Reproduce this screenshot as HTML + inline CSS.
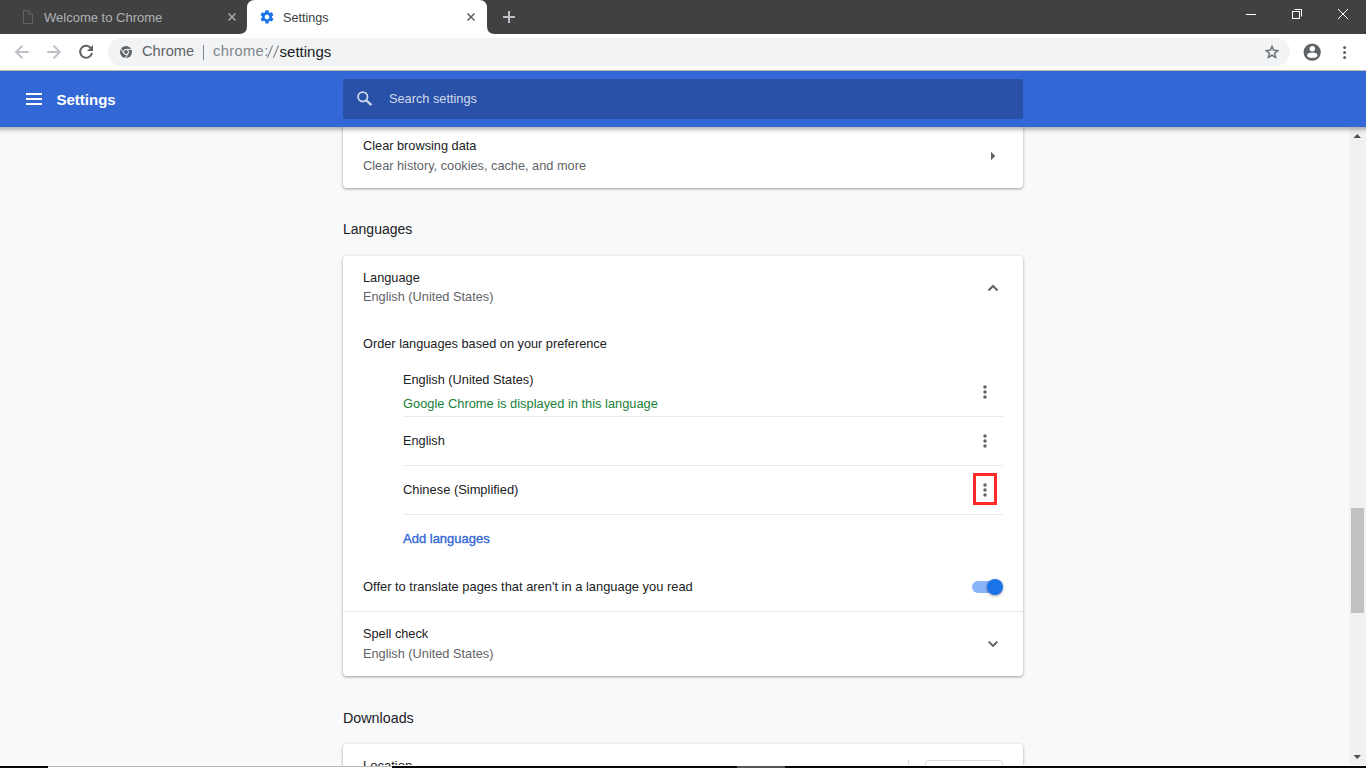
<!DOCTYPE html>
<html><head><meta charset="utf-8">
<style>
*{box-sizing:border-box;margin:0;padding:0}
html,body{width:1366px;height:768px;overflow:hidden;background:#f8f9fa;font-family:"Liberation Sans",sans-serif;color:#202124}
.a{position:absolute}
svg{position:absolute;overflow:visible}
#tabbar{position:absolute;left:0;top:0;width:1366px;height:34px;background:#414141}
#toolbar{position:absolute;left:0;top:34px;width:1366px;height:36px;background:#fff}
#tbline{position:absolute;left:0;top:70px;width:1366px;height:1px;background:#b9b5b0}
#omni{position:absolute;left:108px;top:38px;width:1182px;height:28px;border-radius:14px;background:#f1f3f4}
#header{position:absolute;left:0;top:71px;width:1366px;height:56px;background:#3367d6}
#search{position:absolute;left:343px;top:79px;width:680px;height:40px;border-radius:2px;background:#2851a7}
#shadow{position:absolute;left:0;top:127px;width:1366px;height:7px;background:linear-gradient(to bottom,rgba(0,0,0,.25) 0px,rgba(0,0,0,.25) 1px,rgba(0,0,0,.22) 1px,rgba(0,0,0,.22) 2px,rgba(0,0,0,.165) 2px,rgba(0,0,0,.165) 3px,rgba(0,0,0,.11) 3px,rgba(0,0,0,.11) 4px,rgba(0,0,0,.06) 4px,rgba(0,0,0,.06) 5px,rgba(0,0,0,.03) 5px,rgba(0,0,0,.03) 6px,rgba(0,0,0,.01) 6px,rgba(0,0,0,.01) 7px)}
#sb{position:absolute;left:1349px;top:127px;width:17px;height:641px;background:#f1f1f1}
#thumb{position:absolute;left:1351px;top:508px;width:13px;height:105px;background:#c1c1c1}
.card{position:absolute;left:343px;width:680px;background:#fff;border-radius:4px;box-shadow:0 1px 2px 0 rgba(60,64,67,.3),0 1px 3px 1px rgba(60,64,67,.15)}
.t{position:absolute;font-size:12.75px;white-space:nowrap;line-height:15px;color:#202124}
.sec{color:#5f6368}
.sh{position:absolute;font-size:14px;line-height:17px;white-space:nowrap;color:#202124}
.hr{position:absolute;height:1px;background:#e8eaed}
</style></head>
<body>
<div id="tabbar"></div>
<svg width="1366" height="34" style="left:0;top:0">
  <path d="M239 34 Q247 34 247 26 L247 8 Q247 0 255 0 L479 0 Q487 0 487 8 L487 26 Q487 34 495 34 Z" fill="#fff"/>
  <!-- inactive doc icon -->
  <path d="M23.5 10.5 H28.7 L32.5 14.3 V23.5 H23.5 Z M28.7 10.5 V14.3 H32.5" fill="none" stroke="#616161" stroke-width="1"/>
  <!-- inactive close -->
  <path d="M228.5 13.5 L235.5 20.5 M235.5 13.5 L228.5 20.5" stroke="#a8abae" stroke-width="1.5"/>
  <!-- gear -->
  <g transform="translate(259.08 8.98) scale(0.66)">
    <path fill="#1a73e8" d="M19.43 12.98c.04-.32.07-.64.07-.98s-.03-.66-.07-.98l2.11-1.65c.19-.15.24-.42.12-.64l-2-3.46c-.12-.22-.39-.3-.61-.22l-2.490 1c-.52-.4-1.080-.73-1.690-.98l-.38-2.650C14.460 2.180 14.250 2 14 2h-4c-.25 0-.46.18-.49.42l-.38 2.65c-.61.25-1.17.59-1.69.98l-2.49-1c-.23-.09-.49 0-.61.22l-2 3.46c-.13.22-.07.49.12.64l2.11 1.65c-.04.32-.07.65-.07.98s.03.66.07.98l-2.11 1.65c-.19.15-.24.42-.12.64l2 3.46c.12.22.39.3.61.22l2.49-1c.52.4 1.08.73 1.69.98l.38 2.65c.03.24.24.42.49.42h4c.25 0 .46-.18.49-.42l.38-2.65c.61-.25 1.17-.59 1.69-.98l2.49 1c.23.09.49 0 .61-.22l2-3.46c.12-.22.07-.49-.12-.64l-2.11-1.65zM12 15.5c-1.93 0-3.5-1.57-3.5-3.5s1.57-3.5 3.5-3.5 3.5 1.57 3.5 3.5-1.57 3.5-3.5 3.5z"/>
  </g>
  <!-- active close -->
  <path d="M467.5 13.5 L474.5 20.5 M474.5 13.5 L467.5 20.5" stroke="#5f6368" stroke-width="1.6"/>
  <!-- new tab plus -->
  <path d="M509 11 V23 M503 17 H515" stroke="#bdc1c6" stroke-width="2"/>
  <!-- window controls -->
  <path d="M1246 14.5 H1256" stroke="#fff" stroke-width="1"/>
  <rect x="1292.5" y="11.5" width="7" height="7" fill="none" stroke="#fff" stroke-width="1"/>
  <path d="M1294.5 9.5 H1301.5 V16.5" fill="none" stroke="#fff" stroke-width="1"/>
  <path d="M1338 9 L1348 19 M1348 9 L1338 19" stroke="#fff" stroke-width="1"/>
</svg>
<div class="a" style="left:44px;top:10px;font-size:13px;line-height:15px;color:#aeb3b8;white-space:nowrap">Welcome to Chrome</div>
<div class="a" style="left:283px;top:10.8px;font-size:12.65px;line-height:15px;color:#3c4043;white-space:nowrap">Settings</div>

<div id="toolbar"></div>
<div id="tbline"></div>
<div id="omni"></div>
<svg width="1366" height="36" style="left:0;top:34px">
  <!-- back -->
  <path d="M28.8 18 H16.5 M22.5 11.6 L16.1 18 L22.5 24.4" fill="none" stroke="#bdc1c6" stroke-width="2"/>
  <!-- forward -->
  <path d="M47.2 18 H59.5 M53.5 11.6 L59.9 18 L53.5 24.4" fill="none" stroke="#bdc1c6" stroke-width="2"/>
  <!-- reload -->
  <path d="M91.2 14.5 A6 6 0 1 0 92 19" fill="none" stroke="#5f6368" stroke-width="2"/>
  <path d="M93 11 V17 H87 Z" fill="#5f6368"/>
  <!-- chrome icon -->
  <g transform="translate(126 18)">
    <circle r="6" fill="#5f6368"/>
    <circle r="2.9" fill="#f1f3f4"/>
    <circle r="1.9" fill="#5f6368"/>
    <path d="M0 -2.6 H5.8 M-2.25 1.3 L-5.2 -3.4 M2.25 1.3 L-0.6 6.1" stroke="#f1f3f4" stroke-width="1"/>
  </g>
  <path d="M203.5 11 V26" stroke="#80868b" stroke-width="1"/>
  <!-- star -->
  <path transform="translate(1263.42 9.57) scale(0.715)" fill="#5f6368" stroke="#5f6368" stroke-width="0.35" d="M22 9.24l-7.19-.62L12 2 9.19 8.63 2 9.24l5.46 4.73L5.82 21 12 17.27 18.18 21l-1.63-7.03L22 9.24zM12 15.4l-3.76 2.27 1-4.28-3.32-2.88 4.38-.38L12 6.1l1.71 4.04 4.38.38-3.32 2.88 1 4.28L12 15.4z"/>
  <!-- profile -->
  <g transform="translate(1312.2 18.2)">
    <circle r="8.6" fill="#5f6368"/>
    <circle cx="0.1" cy="-3.5" r="2.75" fill="#fff"/>
    <ellipse cx="0.1" cy="3.1" rx="5.1" ry="2.75" fill="#fff"/>
  </g>
  <!-- menu -->
  <circle cx="1344.6" cy="13.4" r="1.5" fill="#5f6368"/>
  <circle cx="1344.6" cy="18.5" r="1.5" fill="#5f6368"/>
  <circle cx="1344.6" cy="23.6" r="1.5" fill="#5f6368"/>
</svg>
<div class="a" style="left:142px;top:43.4px;font-size:14.7px;line-height:17px;color:#5f6368;white-space:nowrap">Chrome</div>
<div class="a" style="left:213px;top:43.4px;font-size:14.7px;line-height:17px;color:#80868b;white-space:nowrap;letter-spacing:0.36px">chrome:</div>
<svg width="20" height="20" style="left:0;top:0"><path d="M267.4 57.8 L272.6 45.6 M273.4 57.8 L278.6 45.6" stroke="#80868b" stroke-width="1.15"/></svg>
<div class="a" style="left:279.6px;top:43.2px;font-size:15px;line-height:17px;color:#202124;white-space:nowrap">settings</div>

<!-- content -->
<div class="card" style="top:100px;height:88px"></div>
<div class="t" style="left:363px;top:138.4px">Clear browsing data</div>
<div class="t sec" style="left:363px;top:158.2px">Clear history, cookies, cache, and more</div>
<svg width="10" height="10" style="left:0;top:0"><path d="M991 151.7 L995.3 156 L991 160.3 Z" fill="#5f6368"/></svg>

<div class="sh" style="left:343px;top:220.75px">Languages</div>
<div class="card" style="top:256px;height:420px"></div>
<div class="t" style="left:363px;top:269.9px">Language</div>
<div class="t sec" style="left:363px;top:289px">English (United States)</div>
<svg width="10" height="10" style="left:0;top:0"><path d="M988.5 290.5 L993 286 L997.5 290.5" fill="none" stroke="#5f6368" stroke-width="2"/></svg>
<div class="t" style="left:363px;top:336.1px">Order languages based on your preference</div>
<div class="t" style="left:403px;top:372.1px">English (United States)</div>
<div class="t" style="left:403px;top:395.8px;color:#188038;font-size:12.85px">Google Chrome is displayed in this language</div>
<div class="hr" style="left:403px;top:416px;width:600px"></div>
<div class="t" style="left:403px;top:433.2px">English</div>
<div class="hr" style="left:403px;top:465px;width:600px"></div>
<div class="t" style="left:403px;top:482.1px;font-size:12.9px">Chinese (Simplified)</div>
<div class="hr" style="left:403px;top:514px;width:600px"></div>
<div class="t" style="left:403px;top:531.1px;color:#3367d6;font-size:13px;-webkit-text-stroke:0.35px #3367d6">Add languages</div>
<svg width="10" height="10" style="left:0;top:0">
  <circle cx="985" cy="387" r="1.75" fill="#5f6368"/><circle cx="985" cy="392" r="1.75" fill="#5f6368"/><circle cx="985" cy="397" r="1.75" fill="#5f6368"/>
  <circle cx="985" cy="436" r="1.75" fill="#5f6368"/><circle cx="985" cy="441" r="1.75" fill="#5f6368"/><circle cx="985" cy="446" r="1.75" fill="#5f6368"/>
  <circle cx="985" cy="485" r="1.75" fill="#5f6368"/><circle cx="985" cy="490" r="1.75" fill="#5f6368"/><circle cx="985" cy="495" r="1.75" fill="#5f6368"/>
  <rect x="974.5" y="474.5" width="21" height="29" fill="none" stroke="#ff2b2b" stroke-width="3"/>
</svg>
<div class="t" style="left:363px;top:579px;font-size:12.9px">Offer to translate pages that aren't in a language you read</div>
<div class="a" style="left:972px;top:581px;width:28px;height:12px;border-radius:6px;background:#8ab4f8"></div>
<div class="a" style="left:987px;top:579px;width:16px;height:16px;border-radius:8px;background:#1a73e8;box-shadow:0 1px 3px rgba(0,0,0,.4)"></div>
<div class="hr" style="left:343px;top:611px;width:680px"></div>
<div class="t" style="left:363px;top:625.8px">Spell check</div>
<div class="t sec" style="left:363px;top:645.8px">English (United States)</div>
<svg width="10" height="10" style="left:0;top:0"><path d="M988.7 641.6 L993 645.9 L997.3 641.6" fill="none" stroke="#5f6368" stroke-width="2"/></svg>

<div class="sh" style="left:343px;top:709.5px;font-size:14.3px">Downloads</div>
<div class="card" style="top:744px;height:100px"></div>
<div class="t" style="left:363px;top:758.3px;font-size:13px">Location</div>
<div class="a" style="left:908px;top:760px;width:1px;height:20px;background:#dadce0"></div>
<div class="a" style="left:925px;top:760px;width:78px;height:32px;border-radius:4px;border:1px solid #dadce0"></div>

<!-- header -->
<div id="header"></div>
<svg width="30" height="20" style="left:0;top:0">
  <rect x="26" y="93" width="16" height="2" fill="#fff"/>
  <rect x="26" y="98" width="16" height="2" fill="#fff"/>
  <rect x="26" y="103" width="16" height="2" fill="#fff"/>
</svg>
<div class="a" style="left:56.5px;top:91.2px;font-size:15px;line-height:17px;font-weight:700;color:#fff;white-space:nowrap">Settings</div>
<div id="search"></div>
<svg width="20" height="20" style="left:0;top:0">
  <circle cx="362.8" cy="96.8" r="4.7" fill="none" stroke="#cdd5ea" stroke-width="1.8"/>
  <path d="M366.3 100.3 L371.4 105.2" stroke="#cdd5ea" stroke-width="2.3"/>
</svg>
<div class="a" style="left:389px;top:90.9px;font-size:12.75px;line-height:15px;color:#d2daec;white-space:nowrap">Search settings</div>

<div id="sb"></div>
<div id="thumb"></div>
<svg width="17" height="641" style="left:1349px;top:127px">
  <path d="M4.5 11 L12 11 L8.25 7 Z" fill="#505050"/>
  <path d="M4.5 628 L12 628 L8.25 632 Z" fill="#505050"/>
</svg>
<div id="shadow"></div>
<!-- bottom taskbar sliver -->
<div class="a" style="left:0;top:765px;width:48px;height:1px;background:#fff"></div>
<div class="a" style="left:0;top:766px;width:48px;height:2px;background:#080808"></div>
<div class="a" style="left:48px;top:766px;width:344px;height:1px;background:#bbbbbb"></div>
<div class="a" style="left:48px;top:767px;width:344px;height:1px;background:#fff"></div>
<div class="a" style="left:392px;top:765px;width:974px;height:1px;background:#fff"></div>
<div class="a" style="left:392px;top:766px;width:974px;height:2px;background:#080808"></div>
<div class="a" style="left:737px;top:766px;width:48px;height:2px;background:#555"></div>
</body></html>
